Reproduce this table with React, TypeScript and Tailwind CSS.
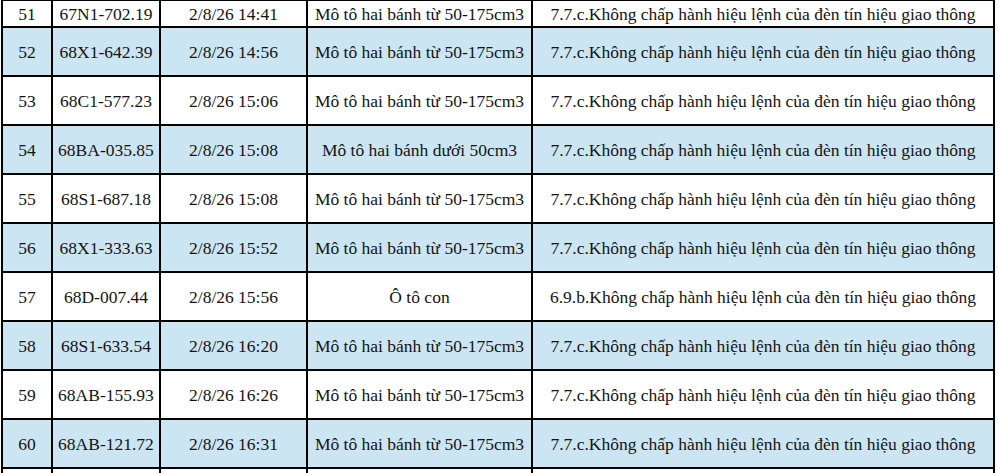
import React from "react";

type Row = {
  stt: number;
  plate: string;
  time: string;
  vehicle: string;
  violation: string;
};

const MOTO = "Mô tô hai bánh từ 50-175cm3";
const V77 = "7.7.c.Không chấp hành hiệu lệnh của đèn tín hiệu giao thông";

const rows: Row[] = [
  { stt: 51, plate: "67N1-702.19", time: "2/8/26 14:41", vehicle: MOTO, violation: V77 },
  { stt: 52, plate: "68X1-642.39", time: "2/8/26 14:56", vehicle: MOTO, violation: V77 },
  { stt: 53, plate: "68C1-577.23", time: "2/8/26 15:06", vehicle: MOTO, violation: V77 },
  { stt: 54, plate: "68BA-035.85", time: "2/8/26 15:08", vehicle: "Mô tô hai bánh dưới 50cm3", violation: V77 },
  { stt: 55, plate: "68S1-687.18", time: "2/8/26 15:08", vehicle: MOTO, violation: V77 },
  { stt: 56, plate: "68X1-333.63", time: "2/8/26 15:52", vehicle: MOTO, violation: V77 },
  { stt: 57, plate: "68D-007.44", time: "2/8/26 15:56", vehicle: "Ô tô con", violation: "6.9.b.Không chấp hành hiệu lệnh của đèn tín hiệu giao thông" },
  { stt: 58, plate: "68S1-633.54", time: "2/8/26 16:20", vehicle: MOTO, violation: V77 },
  { stt: 59, plate: "68AB-155.93", time: "2/8/26 16:26", vehicle: MOTO, violation: V77 },
  { stt: 60, plate: "68AB-121.72", time: "2/8/26 16:31", vehicle: MOTO, violation: V77 },
];

// alternating fill like the source spreadsheet
const fill = (i: number) => (i % 2 === 1 ? "bg-[#cce5f2]" : "bg-white");

const Cell = ({ children, bg }: { children?: React.ReactNode; bg: string }) => (
  <div className={`${bg} flex items-center justify-center whitespace-nowrap pt-[2px]`}>{children}</div>
);

export default function App() {
  return (
    <div
      className="w-[998px] h-[473px] overflow-hidden bg-white text-[17.5px] text-[#141414]"
      style={{ fontFamily: '"Liberation Serif", "Times New Roman", serif' }}
    >
      <div className="ml-[1px] w-[994px] bg-black pt-[1px] px-[2px] grid grid-cols-[48px_106px_145px_223px_460px] grid-rows-[25px_repeat(9,47px)_12px] gap-[2px]">
        {rows.map((r, i) => (
          <React.Fragment key={r.stt}>
            <Cell bg={fill(i)}>{r.stt}</Cell>
            <Cell bg={fill(i)}>{r.plate}</Cell>
            <Cell bg={fill(i)}>{r.time}</Cell>
            <Cell bg={fill(i)}>{r.vehicle}</Cell>
            <Cell bg={fill(i)}>{r.violation}</Cell>
          </React.Fragment>
        ))}
        <Cell bg="bg-white" />
        <Cell bg="bg-white" />
        <Cell bg="bg-white" />
        <Cell bg="bg-white" />
        <Cell bg="bg-white" />
      </div>
    </div>
  );
}
